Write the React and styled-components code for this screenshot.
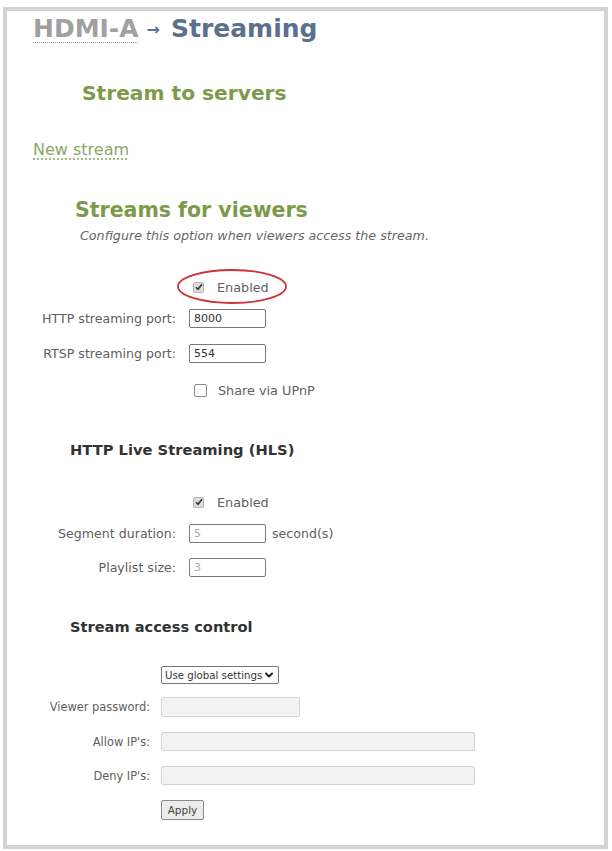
import React from "react";
import styled, { createGlobalStyle } from "styled-components";
import { ChevronDown } from "lucide-react";

const GlobalStyle = createGlobalStyle`
  html, body {
    margin: 0;
    padding: 0;
    background: #ffffff;
  }
  body {
    font-family: "DejaVu Sans", Verdana, sans-serif;
  }
`;

const Frame = styled.div`
  margin: 7px 0 0 3px;
  width: 605px;
  height: 842px;
  border: 4px solid #d3d3d3;
  background: #fff;
  padding: 0 0 0 26px;
  box-sizing: border-box;
  display: flex;
  flex-direction: column;
  align-items: flex-start;
`;

const Title = styled.h1`
  margin: 3px 0 0 0;
  font-size: 25px;
  line-height: 30px;
  font-weight: bold;
  color: #5b6f8e;
  white-space: nowrap;
`;

const Crumb = styled.span`
  color: #a0a0a0;
  text-decoration: underline dotted #999;
  text-decoration-thickness: 1px;
  text-underline-offset: 5px;
`;

const Arrow = styled.span`
  font-size: 16px;
  color: #5b6f8e;
  margin: 0 11px 0 8px;
  vertical-align: 2px;
`;

const GreenHeading = styled.h2`
  margin: ${(p) => p.$top}px 0 0 ${(p) => p.$left}px;
  font-size: ${(p) => p.$size}px;
  line-height: ${(p) => Math.round(p.$size) + 5}px;
  font-weight: bold;
  color: #7c9b4a;
  white-space: nowrap;
`;

const SubHeading = styled.h3`
  margin: ${(p) => p.$top}px 0 0 37px;
  font-size: ${(p) => p.$size}px;
  line-height: 20px;
  font-weight: bold;
  color: #333;
  white-space: nowrap;
`;

const Link = styled.a`
  margin-top: 34px;
  font-size: 16px;
  line-height: 20px;
  color: #8aa868;
  text-decoration: underline dotted #8aa868;
  text-underline-offset: 4px;
  cursor: pointer;
`;

const Hint = styled.p`
  margin: 5px 0 0 47px;
  font-size: 12.7px;
  line-height: 16px;
  font-style: italic;
  color: #666;
  white-space: nowrap;
`;

const Row = styled.div`
  margin-top: ${(p) => p.$top}px;
  height: ${(p) => p.$h || 19}px;
  display: flex;
  align-items: center;
  gap: ${(p) => p.$gap}px;
`;

const Label = styled.span`
  width: ${(p) => p.$w}px;
  text-align: right;
  font-size: ${(p) => p.$size || 12.6}px;
  color: #606060;
  white-space: nowrap;
`;

const Field = styled.div`
  width: ${(p) => p.$w}px;
  height: ${(p) => p.$h || 19}px;
  box-sizing: border-box;
  border: 1px solid ${(p) => (p.$disabled ? "#d4d4d4" : "#7a7a7a")};
  border-radius: 2px;
  background: ${(p) => (p.$disabled ? "#f2f2f2" : "#fff")};
  font-size: 11px;
  line-height: 17px;
  padding-left: 4px;
  color: ${(p) => (p.$muted ? "#aaa" : "#333")};
`;

const Unit = styled.span`
  font-size: 12.6px;
  color: #606060;
  margin-left: -7px;
`;

const CheckWrap = styled.label`
  position: relative;
  display: flex;
  align-items: center;
  gap: ${(p) => p.$gap}px;
  margin-left: ${(p) => p.$offset}px;
  font-size: 12.8px;
  color: #606060;
`;

const Box = styled.span`
  width: ${(p) => (p.$checked ? 11 : 13)}px;
  height: ${(p) => (p.$checked ? 11 : 13)}px;
  box-sizing: border-box;
  border: 1px solid ${(p) => (p.$checked ? "#b5b5b5" : "#8a8a8a")};
  border-radius: 2px;
  background: ${(p) => (p.$checked ? "#dcdcdc" : "#fff")};
  display: flex;
  align-items: center;
  justify-content: center;
`;

const Ring = styled.svg`
  position: absolute;
  left: -17px;
  top: -12px;
  pointer-events: none;
`;

const Select = styled.div`
  width: 118px;
  height: 18px;
  box-sizing: border-box;
  border: 1px solid #777;
  border-radius: 2px;
  padding: 0 3px 0 3px;
  display: flex;
  align-items: center;
  justify-content: space-between;
  font-size: 10.2px;
  color: #333;
  white-space: nowrap;
`;

const Button = styled.button`
  height: 20px;
  width: 43px;
  padding: 0;
  border: 1px solid #8a8a8a;
  border-radius: 2px;
  background: #ececec;
  font-family: "DejaVu Sans", Verdana, sans-serif;
  font-size: 10.5px;
  color: #444;
`;

function Check({ checked, label, offset, gap, ring }) {
  return (
    <CheckWrap $offset={offset} $gap={gap}>
      <Box $checked={checked}>
        {checked && (
          <svg width="8" height="8" viewBox="0 0 8 8">
            <path d="M1 4.2 L3 6.3 L7 1.2" fill="none" stroke="#333" strokeWidth="1.6" />
          </svg>
        )}
      </Box>
      {label}
      {ring && (
        <Ring width="112" height="37" viewBox="0 0 112 37">
          <ellipse cx="56" cy="18.5" rx="54" ry="16.5" fill="none" stroke="#c9343b" strokeWidth="1.8" />
        </Ring>
      )}
    </CheckWrap>
  );
}

export default function App() {
  return (
    <>
      <GlobalStyle />
      <Frame>
        <Title>
          <Crumb>HDMI-A</Crumb>
          <Arrow>→</Arrow>Streaming
        </Title>

        <GreenHeading $top={36} $left={49} $size={20.2}>Stream to servers</GreenHeading>
        <Link>New stream</Link>

        <GreenHeading $top={37} $left={42} $size={20.5}>Streams for viewers</GreenHeading>
        <Hint>Configure this option when viewers access the stream.</Hint>

        <Row $top={33} $h={20} $gap={13}>
          <Label $w={143} />
          <Check checked label="Enabled" offset={4} gap={13} ring />
        </Row>
        <Row $top={12} $gap={13}>
          <Label $w={143}>HTTP streaming port:</Label>
          <Field $w={77}>8000</Field>
        </Row>
        <Row $top={16} $gap={13}>
          <Label $w={143}>RTSP streaming port:</Label>
          <Field $w={77}>554</Field>
        </Row>
        <Row $top={17} $h={20} $gap={13}>
          <Label $w={143} />
          <Check label="Share via UPnP" offset={5} gap={11} />
        </Row>

        <SubHeading $top={40} $size={14.7}>HTTP Live Streaming (HLS)</SubHeading>

        <Row $top={32} $h={20} $gap={13}>
          <Label $w={143} />
          <Check checked label="Enabled" offset={4} gap={13} />
        </Row>
        <Row $top={12} $gap={13}>
          <Label $w={143}>Segment duration:</Label>
          <Field $w={77} $muted>5</Field>
          <Unit>second(s)</Unit>
        </Row>
        <Row $top={15} $gap={13}>
          <Label $w={143}>Playlist size:</Label>
          <Field $w={77} $muted>3</Field>
        </Row>

        <SubHeading $top={40} $size={14.6}>Stream access control</SubHeading>

        <Row $top={29} $h={18} $gap={11}>
          <Label $w={117} />
          <Select>
            Use global settings
            <ChevronDown size={12} strokeWidth={4} color="#222" />
          </Select>
        </Row>
        <Row $top={13} $h={20} $gap={11}>
          <Label $w={117} $size={11.4}>Viewer password:</Label>
          <Field $w={139} $h={20} $disabled />
        </Row>
        <Row $top={15} $gap={11}>
          <Label $w={117} $size={11.4}>Allow IP's:</Label>
          <Field $w={314} $disabled />
        </Row>
        <Row $top={15} $gap={11}>
          <Label $w={117} $size={11.4}>Deny IP's:</Label>
          <Field $w={314} $disabled />
        </Row>
        <Row $top={15} $h={20} $gap={11}>
          <Label $w={117} />
          <Button>Apply</Button>
        </Row>
      </Frame>
    </>
  );
}
